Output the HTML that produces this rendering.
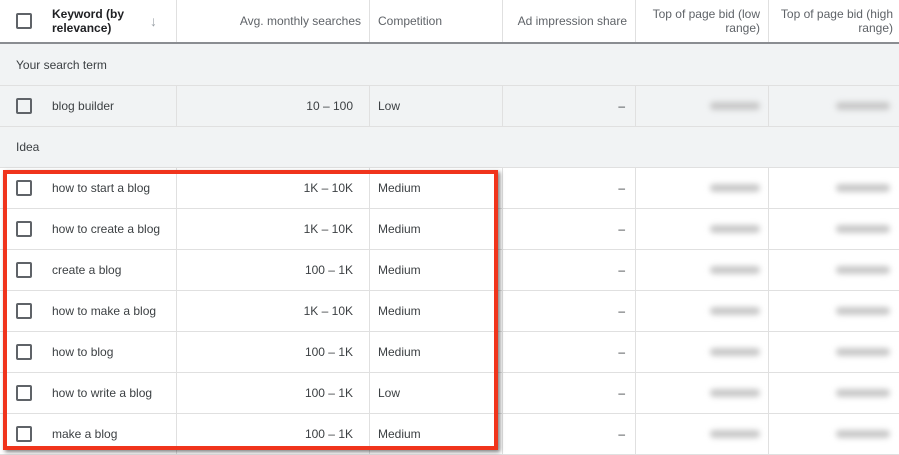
<!DOCTYPE html><html><head><style>
body{margin:0;width:899px;height:454px;overflow:hidden;background:#fff;font-family:"Liberation Sans",Arial,sans-serif;font-size:12px;color:#3c4043;position:relative}
.r{position:absolute;left:0;width:899px;box-sizing:border-box;border-bottom:1px solid #e0e0e0}
.c{position:absolute;top:0;bottom:0;display:flex;align-items:center;box-sizing:border-box}
.v{border-left:1px solid #e0e0e0}
.cb{position:absolute;left:16px;width:12px;height:12px;border:2px solid #5f6368;border-radius:2px}
.bl{position:absolute;height:8px;border-radius:4px;background:#c8c8c8;filter:blur(3px)}
.hd .c{color:#5f6368}
</style></head><body>
<div class="r hd" style="top:0;height:44px;border-bottom:2px solid #8a8d91">
 <div class="cb" style="top:13px"></div>
 <div class="c" style="left:52px;font-weight:bold;color:#202124;line-height:14px">Keyword (by<br>relevance)</div>
 <div class="c" style="left:150px;color:#9aa0a6;font-size:14px">↓</div>
 <div class="c v" style="left:176px;width:193px;justify-content:flex-end;padding-right:8px">Avg. monthly searches</div>
 <div class="c v" style="left:369px;width:133px;padding-left:8px">Competition</div>
 <div class="c v" style="left:502px;width:133px;justify-content:flex-end;padding-right:8px">Ad impression share</div>
 <div class="c v" style="left:635px;width:133px;justify-content:flex-end;padding-right:8px;text-align:right;line-height:14px">Top of page bid (low<br>range)</div>
 <div class="c v" style="left:768px;width:131px;justify-content:flex-end;padding-right:6px;text-align:right;line-height:14px">Top of page bid (high<br>range)</div>
</div>
<div class="r" style="top:44px;height:42px;background:#f1f3f4"><div class="c" style="left:16px">Your search term</div></div>
<div class="r" style="top:86px;height:41px;background:#f1f3f4">
 <div class="cb" style="top:12px"></div><div class="c" style="left:52px">blog builder</div>
 <div class="c v" style="left:176px;width:193px;justify-content:flex-end;padding-right:16px">10 – 100</div>
 <div class="c v" style="left:369px;width:133px;padding-left:8px">Low</div>
 <div class="c v" style="left:502px;width:133px;justify-content:flex-end;padding-right:10px">–</div>
 <div class="c v" style="left:635px;width:133px"></div><div class="c v" style="left:768px;width:131px"></div>
 <div class="bl" style="left:710px;top:16px;width:50px"></div><div class="bl" style="left:836px;top:16px;width:54px"></div>
</div>
<div class="r" style="top:127px;height:41px;background:#f1f3f4"><div class="c" style="left:16px">Idea</div></div>
<div id="rows"></div>
<script>
var d=[["how to start a blog","1K – 10K","Medium"],["how to create a blog","1K – 10K","Medium"],["create a blog","100 – 1K","Medium"],["how to make a blog","1K – 10K","Medium"],["how to blog","100 – 1K","Medium"],["how to write a blog","100 – 1K","Low"],["make a blog","100 – 1K","Medium"]];
var h="";d.forEach(function(x,i){var t=168+i*41;h+='<div class="r" style="top:'+t+'px;height:41px"><div class="cb" style="top:12px"></div><div class="c" style="left:52px">'+x[0]+'</div><div class="c v" style="left:176px;width:193px;justify-content:flex-end;padding-right:16px">'+x[1]+'</div><div class="c v" style="left:369px;width:133px;padding-left:8px">'+x[2]+'</div><div class="c v" style="left:502px;width:133px;justify-content:flex-end;padding-right:10px">–</div><div class="c v" style="left:635px;width:133px"></div><div class="c v" style="left:768px;width:131px"></div><div class="bl" style="left:710px;top:16px;width:50px"></div><div class="bl" style="left:836px;top:16px;width:54px"></div></div>';});
document.getElementById("rows").innerHTML=h;
</script>
<div style="position:absolute;left:3px;top:170px;width:487px;height:272px;border:4px solid #f0341c;box-shadow:2px 2px 4px rgba(0,0,0,.5)"></div>
</body></html>
